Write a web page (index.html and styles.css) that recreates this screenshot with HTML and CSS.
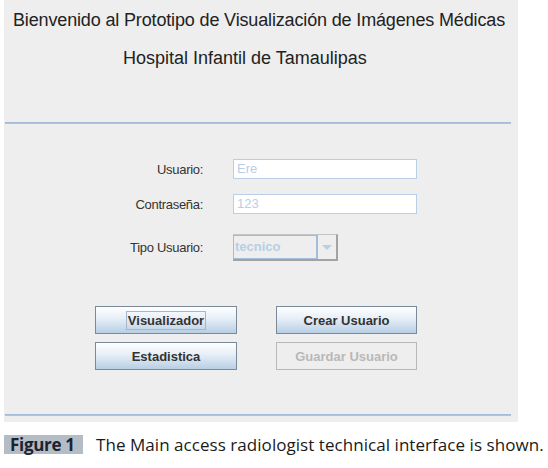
FILE: index.html
```html
<!DOCTYPE html>
<html>
<head>
<meta charset="utf-8">
<link rel="stylesheet" href="styles.css">
</head>
<body>
<div class="panel">
  <div class="header">
    <div class="title1">Bienvenido al Prototipo de Visualización de Imágenes Médicas</div>
    <div class="title2">Hospital Infantil de Tamaulipas</div>
  </div>
  <div class="rule"></div>
  <div class="form">
    <div class="row row1">
      <div class="label">Usuario:</div>
      <div class="field">Ere</div>
    </div>
    <div class="row row2">
      <div class="label">Contraseña:</div>
      <div class="field">123</div>
    </div>
    <div class="row row3">
      <div class="label">Tipo Usuario:</div>
      <div class="combo">
        <div class="combo-text">tecnico</div>
        <div class="combo-btn"><span class="arrow"></span></div>
      </div>
    </div>
  </div>
  <div class="buttons">
    <div class="btn"><span class="focus">Visualizador</span></div>
    <div class="btn">Crear Usuario</div>
    <div class="btn">Estadistica</div>
    <div class="btn disabled">Guardar Usuario</div>
  </div>
  <div class="rule bottom"></div>
</div>
<div class="caption">
  <span class="fig">Figure 1</span>
  <span class="cap-text">The Main access radiologist technical interface is shown.</span>
</div>
</body>
</html>
```
FILE: styles.css
```css
html, body {
  margin: 0;
  padding: 0;
  background: #ffffff;
}
body {
  font-family: "Liberation Sans", Arial, sans-serif;
  color: #333333;
}
.panel {
  margin-left: 4px;
  width: 514px;
  height: 422px;
  background: #eeeeee;
  display: flex;
  flex-direction: column;
}
.header {
  height: 122px;
  box-sizing: border-box;
  padding-top: 9px;
  font-size: 18px;
  line-height: 22px;
  color: #222222;
}
.title1 {
  padding-left: 9px;
  white-space: nowrap;
  letter-spacing: -0.15px;
}
.title2 {
  margin-top: 16px;
  padding-left: 119px;
  white-space: nowrap;
}
.rule {
  flex: none;
  margin-left: 1px;
  width: 506px;
  height: 2px;
  background: linear-gradient(#9fb4d9, #b8c8e4);
}
.form {
  margin-top: 35px;
  display: flex;
  flex-direction: column;
  font-size: 13px;
}
.row {
  display: flex;
  align-items: center;
  gap: 30px;
}
.row1, .row2 { height: 20px; }
.row2 { margin-top: 15px; }
.row3 { margin-top: 20px; height: 27px; }
.label {
  width: 199px;
  text-align: right;
  color: #333333;
  letter-spacing: -0.3px;
}
.field {
  width: 184px;
  height: 20px;
  background: #ffffff;
  border: 1px solid #b8cfe5;
  box-sizing: border-box;
  color: #b8cfe5;
  padding-left: 3px;
  line-height: 18px;
}
.combo {
  width: 105px;
  height: 27px;
  display: flex;
  box-sizing: border-box;
  border-top: 1px solid #c4c4c4;
  border-right: 2px solid #a3a3a3;
  border-bottom: 2px solid #a3a3a3;
}
.combo-text {
  width: 85px;
  box-sizing: border-box;
  border: 1px solid #a3bcd9;
  border-right: 2px solid #a3bcd9;
  background: #eeeeee;
  color: #b8cfe5;
  font-weight: bold;
  padding-left: 1px;
  line-height: 22px;
}
.combo-btn {
  flex: 1;
  display: flex;
  align-items: center;
  justify-content: center;
  background: #eeeeee;
}
.arrow {
  width: 0;
  height: 0;
  border-left: 5px solid transparent;
  border-right: 5px solid transparent;
  border-top: 5px solid #b8cfe5;
}
.buttons {
  margin-top: 45px;
  margin-left: 91px;
  display: grid;
  grid-template-columns: 142px 141px;
  grid-template-rows: 28px 28px;
  column-gap: 39px;
  row-gap: 8px;
}
.btn {
  box-sizing: border-box;
  border: 1px solid #7a8a99;
  background: linear-gradient(#ffffff 0%, #e6eef7 45%, #b8cfe5 100%);
  font-size: 13px;
  font-weight: bold;
  color: #333333;
  display: flex;
  align-items: center;
  justify-content: center;
}
.focus {
  border: 1px solid #a3b8cc;
  padding: 1px 1px;
  line-height: 15px;
}
.btn.disabled {
  border-color: #b8b8b8;
  background: #eeeeee;
  color: #b8b8b8;
}
.rule.bottom {
  margin-top: 44px;
}
.caption {
  margin-top: 11px;
  margin-left: 4px;
  display: flex;
  align-items: center;
  font-family: "Open Sans", Lato, sans-serif;
  font-size: 17px;
  color: #1a1a1a;
}
.fig {
  width: 79px;
  height: 19px;
  box-sizing: border-box;
  background: #b4bcc5;
  font-weight: bold;
  color: #1c2330;
  padding-left: 6px;
  line-height: 19px;
  white-space: nowrap;
  letter-spacing: -0.3px;
}
.cap-text {
  margin-left: 13px;
  white-space: nowrap;
  letter-spacing: 0.05px;
}
```
